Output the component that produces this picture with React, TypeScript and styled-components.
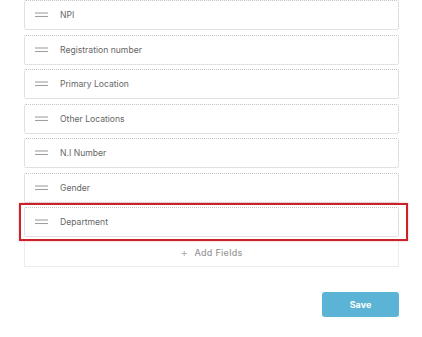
import React from "react";
import styled, { createGlobalStyle } from "styled-components";

const Global = createGlobalStyle`
  html, body { margin: 0; padding: 0; background: #ffffff; }
  body { font-family: Inter, "Liberation Sans", Arial, sans-serif; }
`;

const Page = styled.div`
  width: 422px;
  height: 337px;
  overflow: hidden;
  box-sizing: border-box;
  padding: 0 23px 0 24px;
  display: flex;
  flex-direction: column;
`;

const List = styled.div`
  display: flex;
  flex-direction: column;
  gap: 4.5px;
`;

const Row = styled.div<{ $highlight?: boolean }>`
  position: relative;
  height: 30px;
  box-sizing: border-box;
  border: 1px dotted #c4c4c4;
  border-radius: 2px;
  display: flex;
  align-items: center;
  padding-left: 10px;
  gap: 12px;
  ${(p) =>
    p.$highlight &&
    `
    &::after {
      content: "";
      position: absolute;
      left: -6px;
      right: -10px;
      top: -5px;
      bottom: -5px;
      border: 2.5px solid #c9222b;
      box-shadow: 0 0 2px rgba(201, 34, 43, 0.35);
      pointer-events: none;
    }
  `}
`;

const Handle = styled.svg`
  flex: none;
  width: 13px;
  height: 6px;
`;

const Label = styled.span`
  font-size: 8.6px;
  color: #666666;
`;

const AddRow = styled.div`
  margin-top: 2px;
  height: 28px;
  box-sizing: border-box;
  border: 1px solid #ececec;
  border-top: none;
  display: flex;
  align-items: center;
  justify-content: center;
  gap: 6px;
  color: #999999;
  font-size: 9px;
  font-weight: 500;
  letter-spacing: 0.3px;
`;

const Plus = styled.span`
  font-size: 12px;
  font-weight: 300;
  color: #a5a5a5;
  line-height: 1;
`;

const Footer = styled.div`
  display: flex;
  justify-content: flex-end;
  margin-top: 25px;
`;

const SaveButton = styled.button`
  width: 77px;
  height: 25px;
  border: none;
  border-radius: 3px;
  background: #5bb4d5;
  color: #ffffff;
  font-family: Inter, "Liberation Sans", Arial, sans-serif;
  font-size: 9px;
  font-weight: 700;
  cursor: pointer;
`;

const fields = [
  "NPI",
  "Registration number",
  "Primary Location",
  "Other Locations",
  "N.I Number",
  "Gender",
  "Department",
];

const DragHandle = () => (
  <Handle viewBox="0 0 13 6">
    <line x1="0" y1="1" x2="13" y2="1" stroke="#a0a0a0" strokeWidth="1.1" />
    <line x1="0" y1="4.5" x2="13" y2="4.5" stroke="#a0a0a0" strokeWidth="1.1" />
  </Handle>
);

export default function App() {
  return (
    <>
      <Global />
      <Page>
        <List>
          {fields.map((f) => (
            <Row key={f} $highlight={f === "Department"}>
              <DragHandle />
              <Label>{f}</Label>
            </Row>
          ))}
        </List>
        <AddRow>
          <Plus>+</Plus>
          <span>Add Fields</span>
        </AddRow>
        <Footer>
          <SaveButton>Save</SaveButton>
        </Footer>
      </Page>
    </>
  );
}
